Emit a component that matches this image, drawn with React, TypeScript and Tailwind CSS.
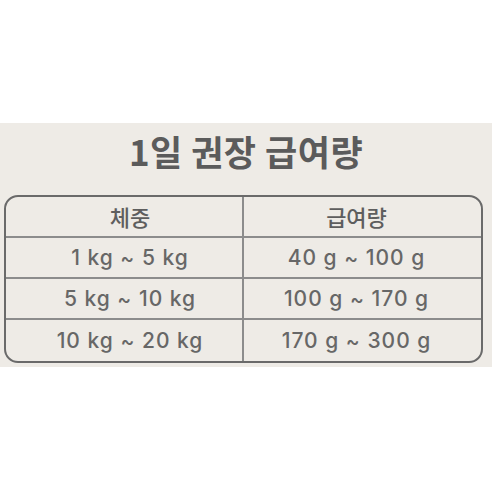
import React from "react";

const rows = [
  ["1 kg ~ 5 kg", "40 g ~ 100 g"],
  ["5 kg ~ 10 kg", "100 g ~ 170 g"],
  ["10 kg ~ 20 kg", "170 g ~ 300 g"],
];

const kr = { fontFamily: '"Noto Sans CJK KR", "Noto Sans", sans-serif' };
const num = { fontFamily: 'Inter, "Noto Sans CJK KR", sans-serif' };

export default function App() {
  return (
    <div className="w-[492px] h-[492px] bg-white flex flex-col">
      <div className="h-[123px]" />
      <div className="h-[244px] bg-[#eeebe6] flex flex-col">
        <div
          className="h-[72px] flex items-center justify-center text-[35px] font-bold text-[#5b5b5b] pb-[16px] tracking-[0.5px]"
          style={kr}
        >
          1일 권장 급여량
        </div>
        <div className="ml-[4px] w-[479px] h-[168px] border-[2.5px] border-[#6a6a6a] rounded-[14px] flex flex-col overflow-hidden">
          <div className="h-[41px] flex border-b-2 border-[#8c8c8c]">
            <div
              className="w-[238px] pl-[12px] border-r-2 border-[#8c8c8c] flex items-center justify-center text-[22px] font-medium text-[#5e5e5e]"
              style={kr}
            >
              체중
            </div>
            <div
              className="flex-1 pr-[12px] flex items-center justify-center text-[22px] font-medium text-[#5e5e5e]"
              style={kr}
            >
              급여량
            </div>
          </div>
          {rows.map((r, i) => (
            <div
              key={i}
              className={
                i < rows.length - 1
                  ? "h-[41px] flex border-b-2 border-[#8c8c8c]"
                  : "flex-1 flex"
              }
            >
              <div
                className="w-[238px] pl-[12px] border-r-2 border-[#8c8c8c] flex items-center justify-center text-[21px] font-medium text-[#676767] tracking-[1px]"
                style={num}
              >
                {r[0]}
              </div>
              <div
                className="flex-1 pr-[12px] flex items-center justify-center text-[21px] font-medium text-[#676767] tracking-[1px]"
                style={num}
              >
                {r[1]}
              </div>
            </div>
          ))}
        </div>
      </div>
      <div className="flex-1" />
    </div>
  );
}
